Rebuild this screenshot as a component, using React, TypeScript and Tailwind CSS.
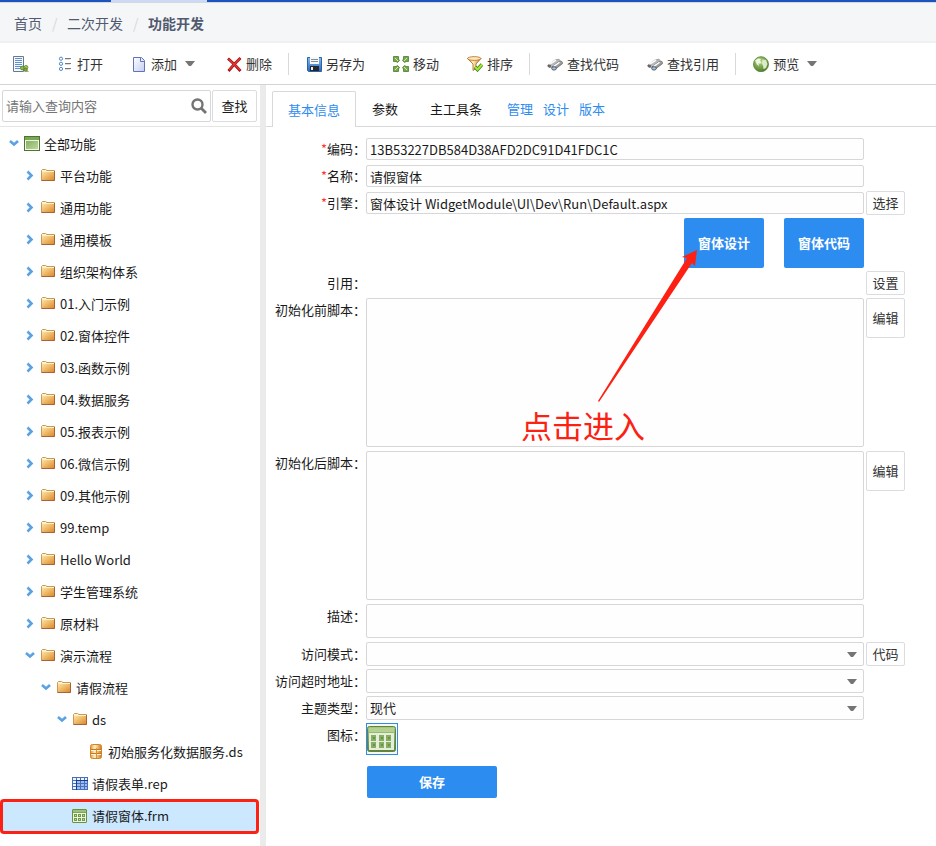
import React from "react";

type Kind = "app" | "folder" | "db" | "table" | "form";
type Node = { name: string; level: number; kind: Kind; state?: "open" | "closed"; selected?: boolean };

const nodes: Node[] = [
  { name: "全部功能", level: 0, kind: "app", state: "open" },
  ...[
    "平台功能", "通用功能", "通用模板", "组织架构体系", "01.入门示例", "02.窗体控件", "03.函数示例", "04.数据服务",
    "05.报表示例", "06.微信示例", "09.其他示例", "99.temp", "Hello World", "学生管理系统", "原材料",
  ].map((name): Node => ({ name, level: 1, kind: "folder", state: "closed" })),
  { name: "演示流程", level: 1, kind: "folder", state: "open" },
  { name: "请假流程", level: 2, kind: "folder", state: "open" },
  { name: "ds", level: 3, kind: "folder", state: "open" },
  { name: "初始服务化数据服务.ds", level: 4, kind: "db" },
  { name: "请假表单.rep", level: 3, kind: "table" },
  { name: "请假窗体.frm", level: 3, kind: "form", selected: true },
];

function Gradients() {
  return (
    <svg width="0" height="0" className="absolute" aria-hidden="true">
      <defs>
        <linearGradient id="gold" x1="0" y1="0" x2="1" y2="1">
          <stop offset="0" stopColor="#fde3a0" />
          <stop offset="1" stopColor="#dd8a30" />
        </linearGradient>
        <linearGradient id="goldBar" x1="0" y1="0" x2="1" y2="0">
          <stop offset="0" stopColor="#e8982e" />
          <stop offset="0.4" stopColor="#fff0c0" />
          <stop offset="1" stopColor="#d07818" />
        </linearGradient>
        <linearGradient id="green" x1="0" y1="0" x2="0" y2="1">
          <stop offset="0" stopColor="#a9cc7c" />
          <stop offset="1" stopColor="#5c8438" />
        </linearGradient>
        <linearGradient id="greenPane" x1="0" y1="0" x2="1" y2="1">
          <stop offset="0" stopColor="#84b060" />
          <stop offset="1" stopColor="#bcd89c" />
        </linearGradient>
        <linearGradient id="paper" x1="0" y1="0" x2="1" y2="1">
          <stop offset="0" stopColor="#ffffff" />
          <stop offset="1" stopColor="#c3cdf3" />
        </linearGradient>
        <linearGradient id="disk" x1="0" y1="0" x2="0" y2="1">
          <stop offset="0" stopColor="#86bdf0" />
          <stop offset="1" stopColor="#2766b8" />
        </linearGradient>
        <linearGradient id="metal" x1="0" y1="0" x2="1" y2="1">
          <stop offset="0" stopColor="#f4f4f4" />
          <stop offset="1" stopColor="#505050" />
        </linearGradient>
        <radialGradient id="globe" cx="0.4" cy="0.3" r="0.8">
          <stop offset="0" stopColor="#b5d683" />
          <stop offset="1" stopColor="#427321" />
        </radialGradient>
      </defs>
    </svg>
  );
}

function Icon({ children }: { children: React.ReactNode }) {
  return <svg viewBox="0 0 16 16" className="size-4 shrink-0" aria-hidden="true">{children}</svg>;
}

const Caret = ({ className = "" }: { className?: string }) => (
  <svg viewBox="0 0 10 6" className={`h-[6px] w-[10px] ${className}`} aria-hidden="true">
    <path d="M0 0H10L6 5H4Z" fill="#757575" />
  </svg>
);

function FormGlyph() {
  return (
    <>
      <rect x="0.5" y="1.5" width="14" height="13" rx="0.5" fill="#edf4e2" stroke="#69903f" />
      <path d="M1 2H14V4H1Z" fill="#9dc078" />
      <path d="M1 4H14V5H1Z" fill="#7da556" />
      {[2, 6, 10].map((x) =>
        [6, 10].map((y) => (
          <g key={`${x}-${y}`}>
            <rect x={x} y={y} width="3" height="3" fill="#6f9a47" />
            <rect x={x + 1} y={y + 1} width="1" height="1" fill="#c4dca8" />
          </g>
        ))
      )}
    </>
  );
}

function NodeIcon({ kind }: { kind: Kind }) {
  if (kind === "app")
    return (
      <Icon>
        <rect x="0.5" y="0.5" width="15" height="14" fill="#f3f8ea" stroke="#4d7531" />
        <path d="M1 1H15V4H1Z" fill="#7ba658" />
        <path d="M1 4H15V5H1Z" fill="#eaf3df" />
        <path d="M2 5H14V13H2Z" fill="url(#greenPane)" />
      </Icon>
    );
  if (kind === "folder")
    return (
      <Icon>
        <path d="M1.5 12V2.5L2.5 1.5H5.5L7 2.5H14.5V12.5H1.5Z" fill="#fff1c9" stroke="#c79a58" />
        <path d="M2 4H14V12H2Z" fill="url(#gold)" />
        <path d="M1.5 12.5H14.5V3" fill="none" stroke="#a5672f" />
      </Icon>
    );
  if (kind === "db")
    return (
      <Icon>
        <rect x="2.5" y="0.5" width="11" height="14" rx="2" fill="url(#goldBar)" stroke="#cf852a" />
        <path d="M3 5.5H13M3 9.5H13" stroke="#c47620" />
        <path d="M3 6.5H13M3 10.5H13" stroke="#fff6d8" />
        <path d="M8.5 4V14" stroke="#d99036" />
      </Icon>
    );
  if (kind === "table")
    return (
      <Icon>
        <path d="M0 1H16V14H0Z" fill="#496fb8" />
        <path d="M1 2H4V4H1ZM5 2H8V4H5ZM9 2H12V4H9ZM13 2H15V4H13ZM1 5H4V7H1ZM1 8H4V10H1ZM1 11H4V13H1Z" fill="#edf3ff" />
        <path d="M5 5H8V7H5ZM9 5H12V7H9ZM13 5H15V7H13ZM5 8H8V10H5ZM9 8H12V10H9ZM13 8H15V10H13ZM5 11H8V13H5ZM9 11H12V13H9ZM13 11H15V13H13Z" fill="#9dbdf5" />
        <path d="M4.5 4V14M4 4.5H16" stroke="#193c86" />
      </Icon>
    );
  return <Icon><FormGlyph /></Icon>;
}

function TreeRow({ node }: { node: Node }) {
  // Leaves have no chevron box, so a level-3 leaf lines up with a folder's icon one level in.
  const boxes = node.state ? node.level : node.level + 1;
  return (
    <button
      type="button"
      role="treeitem"
      aria-selected={!!node.selected}
      aria-expanded={node.state ? node.state === "open" : undefined}
      className={`relative flex h-8 w-full items-center pl-2 text-left ${node.selected ? "bg-[#cce8ff]" : ""}`}
    >
      <span className="shrink-0" style={{ width: boxes * 16 }} />
      {node.state && (
        <svg viewBox="0 0 16 16" className="size-4 shrink-0" fill="none" stroke="#5aa2e3" strokeWidth="2.6" aria-hidden="true">
          {node.state === "open" ? <path d="M2 5L6 8.5L10 5" /> : <path d="M3.5 3.5L7.5 7.5L3.5 11.5" />}
        </svg>
      )}
      <NodeIcon kind={node.kind} />
      <span className="pl-1">{node.name}</span>
      {node.selected && <span className="pointer-events-none absolute -top-px -right-px -bottom-[2px] left-0 rounded-[4px] border-3 border-[#fd2114]" />}
    </button>
  );
}

function Tool({ icon, label, name, menu }: { icon: React.ReactNode; label?: string; name?: string; menu?: boolean }) {
  return (
    <button type="button" aria-label={name} className="flex h-8 shrink-0 items-center gap-1 px-[10px] text-[#333]">
      <Icon>{icon}</Icon>
      {label}
      {menu && <Caret className="mr-[3px] ml-1" />}
    </button>
  );
}

const Sep = () => <span className="-ml-[2px] -mr-px h-[22px] w-px shrink-0 bg-[#d9d9d9]" />;

const finder = (
  <>
    <path d="M0.5 9.5L8 4L12 3.2L13.5 5L6 11L2 11.5Z" fill="#b9b9b9" stroke="#888" strokeWidth="0.7" />
    <path d="M5 11L11.5 5.8L15 5.5L15.7 7.5L9.5 12.2L6 13.5Z" fill="url(#metal)" stroke="#666" strokeWidth="0.7" />
    <path d="M2 8.7L9 4.2M6.5 10.5L12.5 6.3" stroke="#fff" strokeWidth="1.4" />
    <ellipse cx="2.4" cy="10" rx="1.7" ry="1.4" fill="#666" />
    <ellipse cx="7" cy="12.4" rx="2.3" ry="1.7" fill="#9cc4f0" stroke="#444" strokeWidth="0.8" />
  </>
);

function Toolbar() {
  return (
    <div role="toolbar" className="flex h-[42px] items-center gap-2 overflow-hidden border-b border-[#d4d4d4] pl-[3px]">
      <Tool
        name="新建"
        icon={
          <>
            <path d="M0.5 0.5H10.5V15.5H0.5Z" fill="#f5f9ff" stroke="#6c7888" />
            <path d="M2 2.5H9M2 4.5H9M2 6.5H9M2 8.5H9M2 10.5H8M2 12.5H7" stroke="#5b8fd0" />
            <path d="M8 13L15.5 15.5" stroke="#9b8a3a" />
            <circle cx="9.3" cy="12" r="1.9" fill="#8dba4b" stroke="#4f7a24" strokeWidth="0.7" />
            <circle cx="13" cy="11.3" r="1.9" fill="#a0c95c" stroke="#4f7a24" strokeWidth="0.7" />
            <circle cx="12.6" cy="13.8" r="1.7" fill="#7aa93c" stroke="#4f7a24" strokeWidth="0.7" />
          </>
        }
      />
      <Tool
        label="打开"
        icon={
          <>
            <path d="M8 2.5H14M8 7.5H14M8 12.5H14" stroke="#777" />
            <path d="M8 3.5H13M8 8.5H13M8 13.5H13" stroke="#ddd" />
            <g fill="#fff" stroke="#4b87c6">
              <circle cx="4" cy="2.7" r="1.6" />
              <circle cx="4" cy="7.8" r="1.6" />
              <circle cx="4" cy="12.9" r="1.6" />
            </g>
          </>
        }
      />
      <Tool
        label="添加"
        menu
        icon={
          <>
            <path d="M2.5 1.5H10.5L13.5 4.5V15.5H2.5Z" fill="url(#paper)" stroke="#6274b8" />
            <path d="M9.5 1.5V5.5H13.5" fill="#e7ecff" stroke="#6274b8" />
          </>
        }
      />
      <Tool
        label="删除"
        icon={
          <>
            <path d="M2 2.5L8.5 8.5L14.5 15M14.5 2L8 8.5L2.5 15" stroke="#a80e0e" strokeWidth="2.8" fill="none" />
            <path d="M2.5 3L8.5 8.5L14 14M14 2.5L8 8.5L3 14" stroke="#e23d35" strokeWidth="1.2" fill="none" />
          </>
        }
      />
      <Sep />
      <Tool
        label="另存为"
        icon={
          <>
            <path d="M1.5 1.5H15.5V15.5H2.5L1.5 14.5Z" fill="url(#disk)" stroke="#2c62a6" />
            <path d="M4 1H13V8H4Z" fill="#f4f8fd" />
            <path d="M5 3.5H12M5 5.5H12" stroke="#8b8b8b" />
            <path d="M4 10H13V15H4Z" fill="#27272b" />
            <path d="M5 11H7V14H5Z" fill="#e8eef8" />
          </>
        }
      />
      <Tool
        label="移动"
        icon={
          <g fill="#76a84a" stroke="#3f7020" strokeWidth="0.7">
            <path d="M0.5 0.5H5.5V3L6.5 4.5L4.5 6.5L3 5.5H0.5Z" />
            <path d="M15.5 0.5H10.5V3L9.5 4.5L11.5 6.5L13 5.5H15.5Z" />
            <path d="M0.5 15.5H5.5V13L6.5 11.5L4.5 9.5L3 10.5H0.5Z" />
            <path d="M15.5 15.5H10.5V13L9.5 11.5L11.5 9.5L13 10.5H15.5Z" />
            <path d="M2 2L5 5M14 2L11 5M2 14L5 11M14 14L11 11" stroke="#d3edb0" strokeWidth="1" />
          </g>
        }
      />
      <Tool
        label="排序"
        icon={
          <>
            <path d="M0.5 2.5L6 8V14.5L9 12.5V8L14 2.5Z" fill="url(#goldBar)" stroke="#a76122" strokeWidth="0.8" />
            <ellipse cx="7.2" cy="2.5" rx="6.7" ry="1.9" fill="#ffe6b3" stroke="#b46f2c" strokeWidth="0.8" />
            <path d="M8 11L10.5 13.5L15 8.5" fill="none" stroke="#3d7d13" strokeWidth="3.6" />
            <path d="M8 11L10.5 13.5L15 8.5" fill="none" stroke="#a5ea35" strokeWidth="2" />
          </>
        }
      />
      <Sep />
      <Tool label="查找代码" icon={finder} />
      <Tool label="查找引用" icon={finder} />
      <Sep />
      <Tool
        label="预览"
        menu
        icon={
          <>
            <circle cx="8" cy="8.2" r="7.5" fill="url(#globe)" stroke="#54802f" strokeWidth="0.8" />
            <path d="M2 4.5L5 2.5L8 3L7 5L8.5 6L7 8L5.5 7L6 10L4 8.5Z" fill="#eef6df" />
            <path d="M9.5 3.5L13 4L14.5 8L13 12L10.5 13L10 9.5L8.5 7.5Z" fill="#dcebc6" />
          </>
        }
      />
    </div>
  );
}

function Row({ label, id, required, side, top, children }: {
  label?: string; id?: string; required?: boolean; side?: React.ReactNode; top?: boolean; children?: React.ReactNode;
}) {
  return (
    <div className={`flex min-h-6 ${top ? "items-start" : "items-center"}`}>
      <label htmlFor={id} className="w-[100px] shrink-0 text-right leading-6 whitespace-nowrap">
        {required && <span className="text-[#f33]">*</span>}
        {label}
      </label>
      <div className="flex min-w-0 flex-1">{children}</div>
      <div className="ml-[2px] w-[39px] shrink-0">{side}</div>
    </div>
  );
}

const box = "w-full rounded-[2px] border border-[#d7d7d9] bg-[#fefefe] px-[3px] outline-none";

const Side = ({ children, tall }: { children: string; tall?: boolean }) => (
  <button type="button" className={`block w-full rounded-[2px] border border-[#dcdce0] bg-white text-[#333] ${tall ? "h-10" : "h-6"}`}>
    {children}
  </button>
);

function Drop({ id, value }: { id: string; value: string }) {
  return (
    <div className="relative w-full">
      <select id={id} defaultValue={value} className={`${box} block h-6 appearance-none`}>
        <option value={value}>{value}</option>
      </select>
      <Caret className="pointer-events-none absolute top-[10px] right-[7px]" />
    </div>
  );
}

function Form() {
  return (
    <form className="relative flex flex-col gap-[3px] pt-[10px] pr-[31px]" onSubmit={(e) => e.preventDefault()}>
      <Row label="编码：" id="code" required>
        <input id="code" defaultValue="13B53227DB584D38AFD2DC91D41FDC1C" className={`${box} h-[22px]`} />
      </Row>
      <Row label="名称：" id="name" required>
        <input id="name" defaultValue="请假窗体" className={`${box} h-[22px]`} />
      </Row>
      <Row label="引擎：" id="engine" required side={<Side>选择</Side>}>
        <input id="engine" defaultValue="窗体设计 WidgetModule\UI\Dev\Run\Default.aspx" className={`${box} h-[22px]`} />
      </Row>
      <Row>
        <div className="flex flex-1 justify-end gap-5 font-bold text-white">
          <button type="button" className="h-[50px] w-20 rounded-[2px] bg-[#2d8cf0]">窗体设计</button>
          <button type="button" className="h-[50px] w-20 rounded-[2px] bg-[#2d8cf0]">窗体代码</button>
        </div>
      </Row>
      <Row label="引用：" side={<Side>设置</Side>} />
      <Row label="初始化前脚本：" id="before" top side={<Side tall>编辑</Side>}>
        <textarea id="before" className={`${box} mb-px block h-[149px] resize-none`} />
      </Row>
      <Row label="初始化后脚本：" id="after" top side={<Side tall>编辑</Side>}>
        <textarea id="after" className={`${box} mb-px block h-[149px] resize-none`} />
      </Row>
      <Row label="描述：" id="desc" top>
        <textarea id="desc" className={`${box} mb-px block h-[34px] resize-none`} />
      </Row>
      <Row label="访问模式：" id="mode" side={<Side>代码</Side>}><Drop id="mode" value="" /></Row>
      <Row label="访问超时地址：" id="timeout"><Drop id="timeout" value="" /></Row>
      <Row label="主题类型：" id="theme"><Drop id="theme" value="现代" /></Row>
      <Row label="图标：" id="icon" top>
        <button id="icon" type="button" className="size-8 border border-[#2d8cf0] bg-[#f4f8ee]">
          <svg viewBox="0 0 30 30" className="size-[30px]" aria-hidden="true">
            <rect x="0.5" y="2.5" width="28" height="25" rx="2" fill="url(#green)" stroke="#62843f" />
            <path d="M2 4H27V8H2Z" fill="#b4d092" />
            <path d="M2 9H27V26H2Z" fill="#e6edda" />
            {[4, 12, 19].map((x) =>
              [11, 18].map((y) => (
                <g key={`${x}-${y}`}>
                  <rect x={x} y={y} width="5" height="6" fill="#86ae62" />
                  <rect x={x + 2} y={y + 2} width="2" height="2" fill="#6b9448" />
                </g>
              ))
            )}
          </svg>
        </button>
      </Row>
      <div className="pt-2 pl-[101px]">
        <button type="submit" className="block h-8 w-[130px] rounded-[2px] bg-[#2d8cf0] font-bold text-white">保存</button>
      </div>

      <svg viewBox="0 0 100 153" className="pointer-events-none absolute top-[123px] left-[332px] h-[153px] w-[100px]" aria-hidden="true">
        <path d="M99 0L84 7L89 8L0 151L1 152L94 13L97 16Z" fill="#fd2114" />
      </svg>
      <span className="pointer-events-none absolute top-[280px] left-[255px] text-[31px] leading-9 text-[#fd2114]">点击进入</span>
    </form>
  );
}

export default function App() {
  return (
    <div className="flex min-h-screen flex-col bg-white font-['Noto_Sans_CJK_SC',sans-serif] text-[13px] leading-5 text-[#1a1a1a]">
      <Gradients />
      <div className="flex h-[2px] bg-[#1c54bd]">
        <span className="ml-[111px] w-24 bg-[#ccdaf5]" />
      </div>
      <nav aria-label="位置" className="flex h-[41px] items-center gap-[10px] border-t border-b-2 border-t-[#d5d8de] border-b-[#eff0f2] bg-[#f5f6f8] pt-px pl-[14px] text-[14px] text-[#515a6e]">
        <a href="#home">首页</a>
        <span className="w-[5px] text-center text-[#d5d8de]">/</span>
        <a href="#dev">二次开发</a>
        <span className="w-[5px] text-center text-[#d5d8de]">/</span>
        <a href="#func" className="font-bold">功能开发</a>
      </nav>
      <Toolbar />
      <div className="flex flex-1">
        <aside className="w-[260px] shrink-0">
          <div className="flex h-[42px] items-center gap-px border-b border-[#e4e4e4] pr-[3px] pl-[2px]">
            <div className="flex h-8 flex-1 items-center rounded-[2px] border border-[#d7d7d9] pr-[3px] pl-[3px]">
              <input aria-label="查询" placeholder="请输入查询内容" className="min-w-0 flex-1 outline-none placeholder:text-[#757575]" />
              <svg viewBox="0 0 16 16" className="size-4" fill="none" stroke="#747474" aria-hidden="true">
                <circle cx="6.5" cy="6.5" r="5" strokeWidth="2.4" />
                <path d="M10.5 10.5L15 15" strokeWidth="2.8" />
              </svg>
            </div>
            <button type="button" className="h-8 w-[45px] rounded-[2px] border border-[#dcdce0]">查找</button>
          </div>
          <div role="tree" aria-label="功能" className="pt-px pr-[2px]">
            {nodes.map((n) => <TreeRow key={n.name} node={n} />)}
          </div>
        </aside>
        <div className="w-[6px] shrink-0 bg-[#ebebeb]" />
        <main className="min-w-0 flex-1">
          <div className="flex h-[42px] items-end border-b border-[#d9d9dc] pl-[6px]">
            <div role="tablist" className="-mb-px flex">
              <button type="button" role="tab" aria-selected="true" className="h-9 rounded-t-[2px] border border-b-0 border-[#d9d9dc] bg-white px-[15px] text-[#2d8cf0]">基本信息</button>
              <button type="button" role="tab" aria-selected="false" className="h-9 px-4">参数</button>
              <button type="button" role="tab" aria-selected="false" className="h-9 px-4">主工具条</button>
            </div>
            <div className="-mb-px ml-[9px] flex h-9 items-center gap-[10px] text-[#2d8cf0]">
              <a href="#manage">管理</a>
              <a href="#design">设计</a>
              <a href="#version">版本</a>
            </div>
          </div>
          <Form />
        </main>
      </div>
    </div>
  );
}
